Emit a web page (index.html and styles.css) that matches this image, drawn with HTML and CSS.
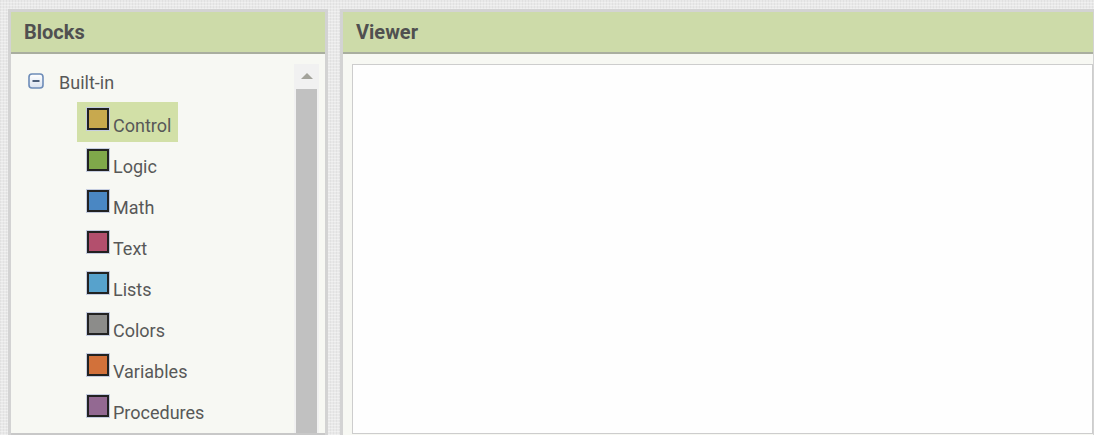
FILE: index.html
```html
<!DOCTYPE html>
<html>
<head>
<meta charset="utf-8">
<link rel="stylesheet" href="styles.css">
</head>
<body>
<div class="page">
  <section class="panel blocks">
    <div class="panel-head">Blocks</div>
    <div class="panel-body">
      <div class="tree">
        <div class="root-row">
          <svg class="toggle" width="16" height="16" viewBox="0 0 16 16">
            <defs>
              <linearGradient id="tg" x1="0" y1="0" x2="0" y2="1">
                <stop offset="0" stop-color="#ffffff"/>
                <stop offset="1" stop-color="#d9e2ef"/>
              </linearGradient>
            </defs>
            <rect x="1" y="1" width="14" height="14" rx="3" ry="3" fill="url(#tg)" stroke="#6d8cb8" stroke-width="1.6"/>
            <rect x="4.5" y="7" width="7" height="2" fill="#4d5f7a"/>
          </svg>
          <span class="root-label">Built-in</span>
        </div>
        <ul class="items">
          <li class="item selected"><span class="swatch" style="background:#c8a94e"></span>Control</li>
          <li class="item"><span class="swatch" style="background:#7fa84a"></span>Logic</li>
          <li class="item"><span class="swatch" style="background:#4a87c3"></span>Math</li>
          <li class="item"><span class="swatch" style="background:#b34f6d"></span>Text</li>
          <li class="item"><span class="swatch" style="background:#57a2cc"></span>Lists</li>
          <li class="item"><span class="swatch" style="background:#8c8c8a"></span>Colors</li>
          <li class="item"><span class="swatch" style="background:#d2713a"></span>Variables</li>
          <li class="item"><span class="swatch" style="background:#936992"></span>Procedures</li>
        </ul>
      </div>
      <div class="scrollbar">
        <div class="arrow"></div>
        <div class="thumb"></div>
      </div>
    </div>
  </section>
  <section class="panel viewer">
    <div class="panel-head">Viewer</div>
    <div class="panel-body">
      <div class="canvas"></div>
    </div>
  </section>
</div>
</body>
</html>
```
FILE: styles.css
```css
html, body {
  margin: 0;
  padding: 0;
  height: 100%;
  overflow: hidden;
}
body {
  background-color: #e9e9e9;
  background-image:
    repeating-linear-gradient(0deg, rgba(255,255,255,0.35) 0 1px, transparent 1px 3px),
    repeating-linear-gradient(90deg, rgba(200,200,200,0.25) 0 1px, transparent 1px 3px);
  font-family: Roboto, "Liberation Sans", sans-serif;
  color: #555;
}
.page {
  display: flex;
  gap: 12px;
  padding: 9px 0 0 8px;
  height: 440px;
  box-sizing: border-box;
}
.panel {
  border: 3px solid #d3d3d3;
  border-bottom: none;
  display: flex;
  flex-direction: column;
  box-sizing: border-box;
}
.blocks { width: 320px; flex: none; }
.viewer { width: 756px; flex: none; }
.panel-head {
  height: 40px;
  background: #cddba9;
  border-bottom: 2px solid #a9ae9f;
  font-weight: bold;
  font-size: 20px;
  line-height: 41px;
  padding-left: 13px;
  color: #505050;
}
.panel-body {
  flex: 1;
  background: #f7f8f3;
  display: flex;
}
.blocks .panel-body {
  height: 379px;
  flex: none;
  border-bottom: 2px solid #c8c8c8;
}
.tree {
  flex: 1;
  padding: 20px 0 0 16px;
}
.root-row {
  display: flex;
  align-items: center;
  height: 16px;
}
.toggle { display: block; margin-top: -2px; margin-left: 1px; }
.root-label {
  margin-left: 15px;
  font-size: 18px;
  color: #585858;
}
.items {
  list-style: none;
  margin: 12px 0 0 50px;
  padding: 0;
}
.item {
  display: flex;
  align-items: flex-end;
  width: 101px;
  height: 40px;
  margin-bottom: 1px;
  box-sizing: border-box;
  padding: 0 0 6px 9px;
  font-size: 18px;
  line-height: 20px;
  color: #585858;
}
.item.selected { background: #d2e0a7; }
.swatch {
  flex: none;
  box-sizing: border-box;
  width: 22px;
  height: 22px;
  border: 2px solid #222;
  box-shadow: 0 0 0 1px #c5cde0;
  margin: 0 4px 6px 1px;
}
.scrollbar {
  width: 25px;
  margin: 10px 6px 0 0;
  background: #f1f1f1;
  display: flex;
  flex-direction: column;
  align-items: center;
}
.arrow {
  width: 0;
  height: 0;
  border-left: 6px solid transparent;
  border-right: 6px solid transparent;
  border-bottom: 6px solid #a3a39b;
  margin: 9px 0 10px;
}
.thumb {
  width: 21px;
  flex: 1;
  background: #c1c1c1;
}
.viewer .panel-body {
  padding: 10px 0 0 9px;
}
.canvas {
  flex: 1;
  background: #fefefe;
  border: 1px solid #cdcdcd;
  height: 368px;
}
```
